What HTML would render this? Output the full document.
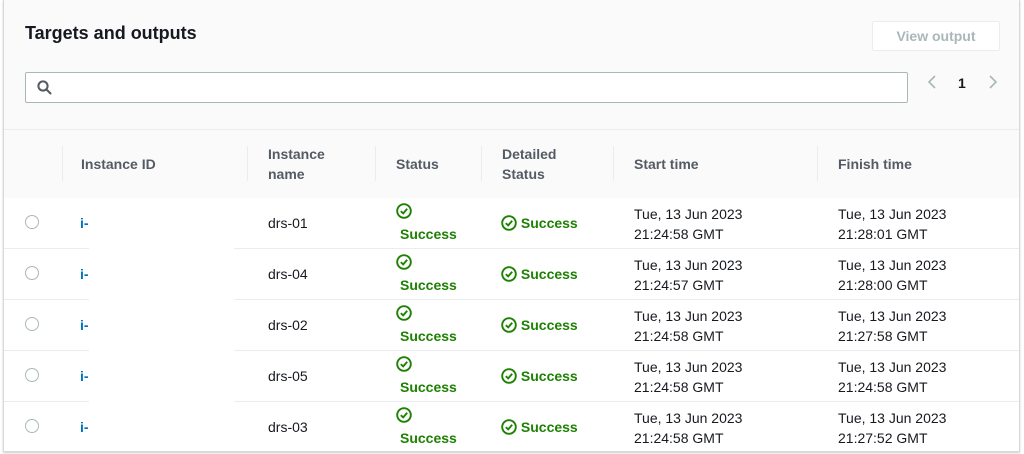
<!DOCTYPE html>
<html><head><meta charset="utf-8"><style>
*{margin:0;padding:0;box-sizing:border-box}
body{width:1024px;height:454px;background:#fff;font-family:"Liberation Sans",Arial,sans-serif;font-size:14px;color:#16191f;position:relative;overflow:hidden}
.box{position:absolute;left:3px;top:0px;width:1017px;height:452px;border:1px solid #d5dbdb;border-top:none;box-shadow:0 1px 2px rgba(0,0,0,.2);background:#fff;overflow:hidden}
.top{position:absolute;left:0;top:0;width:100%;height:198px;background:#fafafa}
.sep0{position:absolute;left:0;top:129px;width:100%;height:1px;background:#eaeded}
.a{position:absolute;white-space:nowrap}
h2{position:absolute;left:21px;top:23px;font-size:18px;font-weight:bold;color:#16191f}
.btn{position:absolute;left:868px;top:21px;width:128px;height:30px;border:1px solid #eaeded;background:#fff;border-radius:2px;color:#aab7b8;font-weight:bold;text-align:center;line-height:28px}
.search{position:absolute;left:21px;top:72px;width:883px;height:31px;border:1px solid #aab7b8;background:#fff;border-radius:2px}
.th{position:absolute;font-weight:bold;color:#545b64;line-height:20px}
.vd{position:absolute;top:146px;width:1px;height:35px;background:#eaeded}
.row{position:absolute;left:0;width:100%;height:51px;border-bottom:1px solid #eaeded}
.radio{position:absolute;left:21px;width:14px;height:14px;border:1px solid #aab7b8;border-radius:50%}
.g{color:#1d8102}
.ck{display:inline-block;vertical-align:-3px}
.lh{line-height:20px}
.mask{position:absolute;left:85px;top:198px;width:145px;height:260px;background:#fff}
</style></head><body>
<div class="box">
<div class="top"></div>
<div class="sep0"></div>
<h2>Targets and outputs</h2>
<div class="btn">View output</div>
<div class="search"><svg style="position:absolute;left:11px;top:7px" width="15" height="15" viewBox="0 0 15 15"><circle cx="6" cy="6" r="4.6" fill="none" stroke="#545b64" stroke-width="2"/><path d="M9.5 9.5 L13.5 13.5" stroke="#545b64" stroke-width="2" stroke-linecap="round"/></svg></div>
<svg class="a" style="left:922px;top:74px" width="12" height="16" viewBox="0 0 12 16"><path d="M9 2 L3 8 L9 14" fill="none" stroke="#aab7b8" stroke-width="1.6"/></svg>
<div class="a" style="left:954px;top:75px;font-weight:bold;font-size:14px">1</div>
<svg class="a" style="left:983px;top:74px" width="12" height="16" viewBox="0 0 12 16"><path d="M3 2 L9 8 L3 14" fill="none" stroke="#aab7b8" stroke-width="1.6"/></svg>

<div class="vd" style="left:58px"></div>
<div class="vd" style="left:243px"></div>
<div class="vd" style="left:371px"></div>
<div class="vd" style="left:477px"></div>
<div class="vd" style="left:609px"></div>
<div class="vd" style="left:813px"></div>
<div class="th" style="left:77px;top:154px">Instance ID</div>
<div class="th" style="left:264px;top:144px">Instance<br>name</div>
<div class="th" style="left:392px;top:154px">Status</div>
<div class="th" style="left:498px;top:144px">Detailed<br>Status</div>
<div class="th" style="left:630px;top:154px">Start time</div>
<div class="th" style="left:834px;top:154px">Finish time</div>

<div id="rows"></div>
<div class="mask"></div>
</div>
<script>
var d=[["drs-01","21:24:58","21:28:01"],["drs-04","21:24:57","21:28:00"],["drs-02","21:24:58","21:27:58"],["drs-05","21:24:58","21:24:58"],["drs-03","21:24:58","21:27:52"]];
var ck='<svg class="ck" width="16" height="16" viewBox="0 0 16 16"><circle cx="8" cy="8" r="6.8" fill="none" stroke="#1d8102" stroke-width="1.9"/><path d="M4.8 8.2 L7.2 10.4 L11.2 5.8" fill="none" stroke="#1d8102" stroke-width="1.9"/></svg>';
var h='';
d.forEach(function(r,i){var t=198+i*51;
h+='<div class="row" style="top:'+t+'px"></div>';
h+='<div class="radio" style="top:'+(t+17)+'px"></div>';
h+='<div class="a" style="left:76px;top:'+(t+17)+'px;color:#0073bb;font-weight:bold">i-</div>';
h+='<div class="a" style="left:264px;top:'+(t+17)+'px">'+r[0]+'</div>';
h+='<div class="a g" style="left:392px;top:'+(t+5)+'px">'+ck+'</div>';
h+='<div class="a g" style="left:396px;top:'+(t+28)+'px;font-weight:bold">Success</div>';
h+='<div class="a g" style="left:497px;top:'+(t+17)+'px;font-weight:bold">'+ck+' Success</div>';
h+='<div class="a lh" style="left:630px;top:'+(t+6)+'px">Tue, 13 Jun 2023<br>'+r[1]+' GMT</div>';
h+='<div class="a lh" style="left:834px;top:'+(t+6)+'px">Tue, 13 Jun 2023<br>'+r[2]+' GMT</div>';
});
document.getElementById('rows').innerHTML=h;
</script>
</body></html>
